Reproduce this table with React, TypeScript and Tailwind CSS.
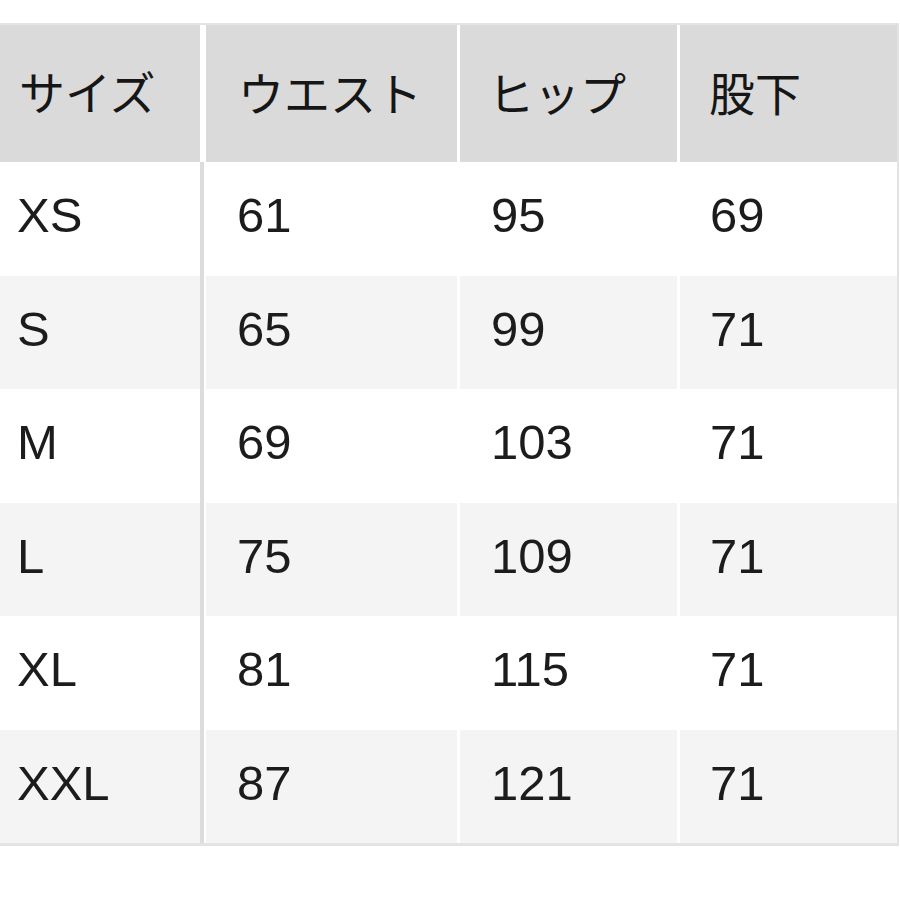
const header = ["サイズ", "ウエスト", "ヒップ", "股下"];

const rows = [
  ["XS", "61", "95", "69"],
  ["S", "65", "99", "71"],
  ["M", "69", "103", "71"],
  ["L", "75", "109", "71"],
  ["XL", "81", "115", "71"],
  ["XXL", "87", "121", "71"],
];

export default function App() {
  return (
    <div
      className="w-[900px] h-[900px] bg-white pt-[23px] text-[#1c1c1c]"
      style={{ fontFamily: '"Liberation Sans", "Noto Sans CJK JP", sans-serif' }}
    >
      {/* サイズ表 */}
      <div className="w-[899px] border-t-2 border-b-[3px] border-r-2 border-[#e3e3e3]">
        {/* 見出し */}
        <div
          className="flex h-[137px] text-[46px] font-normal text-[#161616]"
          style={{ fontFamily: '"Noto Sans CJK JP", sans-serif' }}
        >
          <div className="w-[200px] bg-[#dadada] flex items-center pl-[19px] pb-[6px]">{header[0]}</div>
          <div className="w-[6px]" />
          <div className="w-[251px] bg-[#dadada] flex items-center pl-[32px] pb-[4px]">{header[1]}</div>
          <div className="w-[3px]" />
          <div className="w-[217px] bg-[#dadada] flex items-center pl-[28px] pb-[4px]">{header[2]}</div>
          <div className="w-[3px]" />
          <div className="w-[217px] bg-[#dadada] flex items-center pl-[29px] pb-[4px]">{header[3]}</div>
        </div>

        {/* 各サイズ */}
        {rows.map((row, i) => {
          const bg = i % 2 === 1 ? "bg-[#f4f4f4]" : "bg-white";
          return (
            <div key={row[0]} className="flex h-[113.5px] text-[49px] leading-none">
              <div className={`w-[200px] ${bg} flex items-center pl-[17px] pb-[6px]`}>{row[0]}</div>
              <div className="w-[4px] bg-[#dcdcdc]" />
              <div className="w-[2px]" />
              <div className={`w-[251px] ${bg} flex items-center pl-[31px] pb-[6px]`}>{row[1]}</div>
              <div className="w-[3px]" />
              <div className={`w-[217px] ${bg} flex items-center pl-[31px] pb-[6px]`}>{row[2]}</div>
              <div className="w-[3px]" />
              <div className={`w-[217px] ${bg} flex items-center pl-[30px] pb-[6px]`}>{row[3]}</div>
            </div>
          );
        })}
      </div>
    </div>
  );
}
